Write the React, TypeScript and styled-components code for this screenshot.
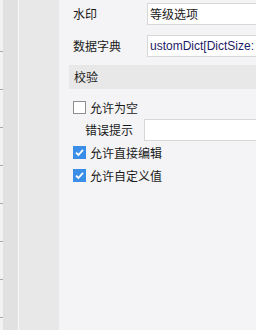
import React from 'react';
import styled, { createGlobalStyle } from 'styled-components';

const GlobalStyle = createGlobalStyle`
  html, body {
    margin: 0;
    padding: 0;
    background: #f4f4f6;
  }
  body {
    font-family: "Noto Sans CJK SC", "Liberation Sans", sans-serif;
    font-size: 12px;
    color: #1a1a1a;
  }
`;

const Layout = styled.div`
  display: flex;
  width: 256px;
  height: 330px;
  overflow: hidden;
`;
const Ruler = styled.div`
  width: 3px;
  flex-shrink: 0;
  background: repeating-linear-gradient(
    to bottom,
    #f2f2f2 0,
    #f2f2f2 37px,
    #a8a8a8 37px,
    #a8a8a8 38px
  );
  background-position: 0 14px;
`;
const Strip = styled.div<{ $w: number; $bg: string }>`
  width: ${({ $w }) => $w}px;
  flex-shrink: 0;
  background: ${({ $bg }) => $bg};
`;
const Panel = styled.section`
  flex: 1;
  min-width: 0;
  overflow: hidden;
  background: #f4f4f6;
  padding: 3px 0 0 14px;
  box-sizing: border-box;
`;
const FormRow = styled.div`
  display: grid;
  grid-template-columns: 74px 160px;
  align-items: center;
  height: 22px;
  margin-bottom: 10px;
`;
const Label = styled.label`
  line-height: 22px;
  white-space: nowrap;
`;
const Input = styled.div<{ $latin?: boolean }>`
  height: 22px;
  box-sizing: border-box;
  border: 1px solid #d7d7d7;
  background: #fff;
  padding: 0 2px;
  line-height: 20px;
  white-space: nowrap;
  overflow: hidden;
  font-family: ${({ $latin }) =>
    $latin ? '"Liberation Sans", Arial, sans-serif' : '"Noto Sans CJK SC", sans-serif'};
  color: ${({ $latin }) => ($latin ? '#1c1c66' : '#1a1a1a')};
`;
const SectionHead = styled.div`
  margin: -2px 0 0 -4px;
  height: 24px;
  line-height: 24px;
  padding-left: 5px;
  background: #e8e8e8;
`;
const CheckList = styled.div`
  display: flex;
  flex-direction: column;
  padding-top: 7px;
`;
const CheckRow = styled.div`
  display: flex;
  align-items: center;
  gap: 4px;
  height: 23px;
`;
const Box = styled.span<{ $on?: boolean }>`
  width: 13px;
  height: 13px;
  box-sizing: border-box;
  flex-shrink: 0;
  display: flex;
  align-items: center;
  justify-content: center;
  border: 1px solid ${({ $on }) => ($on ? '#3b8ee8' : '#8e8e8e')};
  background: ${({ $on }) => ($on ? '#3b8ee8' : '#fff')};
`;
const PromptRow = styled.div`
  display: grid;
  grid-template-columns: 59px 160px;
  align-items: center;
  height: 22px;
  padding-left: 12px;
`;

function Check({ on, label }: { on?: boolean; label: string }) {
  return (
    <CheckRow>
      <Box $on={on}>
        {on && (
          <svg width="11" height="11" viewBox="0 0 11 11">
            <path d="M2 5.6 L4.4 8 L9 2.8" fill="none" stroke="#fff" strokeWidth="1.8" />
          </svg>
        )}
      </Box>
      <span>{label}</span>
    </CheckRow>
  );
}

function App() {
  return (
    <Layout>
      <GlobalStyle />
      <Ruler />
      <Strip $w={15} $bg="#e1e1e1" />
      <Strip $w={1} $bg="#f7f7f7" />
      <Strip $w={40} $bg="#e8e8e8" />
      <Panel>
        <FormRow>
          <Label>水印</Label>
          <Input>等级选项</Input>
        </FormRow>
        <FormRow>
          <Label>数据字典</Label>
          <Input $latin>ustomDict[DictSize:</Input>
        </FormRow>
        <SectionHead>校验</SectionHead>
        <CheckList>
          <Check label="允许为空" />
          <PromptRow>
            <Label>错误提示</Label>
            <Input />
          </PromptRow>
          <Check on label="允许直接编辑" />
          <Check on label="允许自定义值" />
        </CheckList>
      </Panel>
    </Layout>
  );
}

export default App;
